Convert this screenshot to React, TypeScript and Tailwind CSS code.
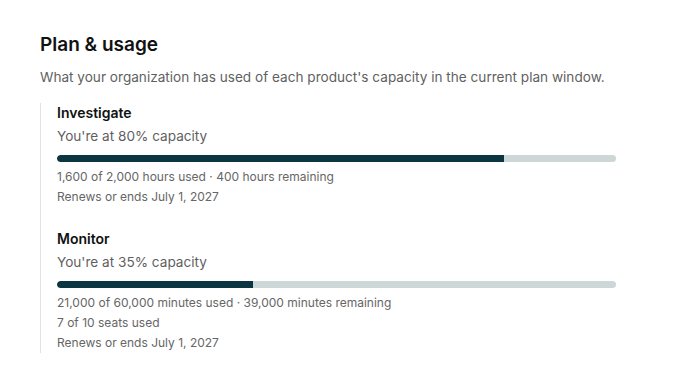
import React from "react";

type Item = {
  name: string;
  pct: number;
  lines: string[];
};

const items: Item[] = [
  {
    name: "Investigate",
    pct: 80,
    lines: ["1,600 of 2,000 hours used · 400 hours remaining", "Renews or ends July 1, 2027"],
  },
  {
    name: "Monitor",
    pct: 35,
    lines: [
      "21,000 of 60,000 minutes used · 39,000 minutes remaining",
      "7 of 10 seats used",
      "Renews or ends July 1, 2027",
    ],
  },
];

export default function App() {
  return (
    <div
      className="w-[688px] h-[388px] bg-white px-10 pt-[31px]"
      style={{ fontFamily: "Inter, 'Noto Sans', sans-serif" }}
    >
      <h2 className="text-[19px] leading-[28px] font-semibold text-[#111111]">Plan &amp; usage</h2>
      <p className="mt-[8px] text-[13.6px] leading-[20px] text-[#5f5f5f]">
        What your organization has used of each product's capacity in the current plan window.
      </p>
      <div className="mt-[16px] border-l border-[#e3e3e3] pl-4 flex flex-col gap-[22px] w-[576px]">
        {items.map((it) => (
          <div key={it.name} className="flex flex-col">
            <div className="text-[14px] leading-[20px] font-semibold text-[#111111]">{it.name}</div>
            <div className="mt-[3px] text-[13.6px] leading-[20px] text-[#5f5f5f]">
              You're at {it.pct}% capacity
            </div>
            <div className="mt-[9px] h-[7px] w-[559px] rounded-full bg-[#cdd7d7] overflow-hidden flex">
              <div className="h-full bg-[#0b3540] rounded-l-full" style={{ width: `${it.pct}%` }} />
            </div>
            <div className="mt-[5px] flex flex-col">
              {it.lines.map((l) => (
                <div key={l} className="text-[12px] leading-[20px] text-[#666666]">
                  {l}
                </div>
              ))}
            </div>
          </div>
        ))}
      </div>
    </div>
  );
}
